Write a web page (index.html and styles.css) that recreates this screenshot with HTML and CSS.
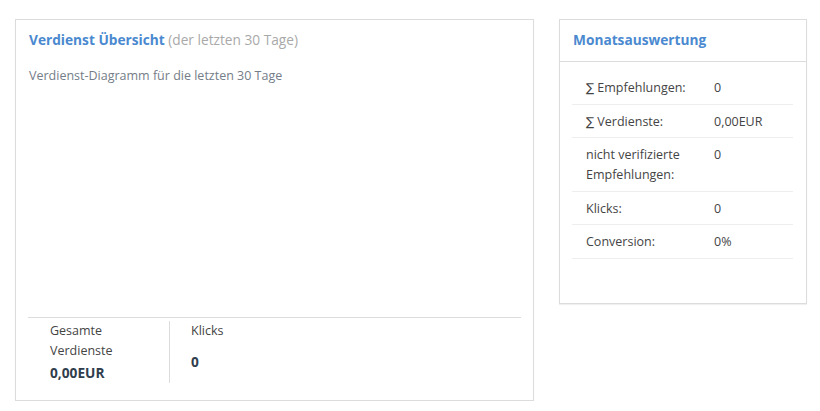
FILE: index.html
```html
<!DOCTYPE html>
<html lang="de">
<head>
<meta charset="utf-8">
<title>Verdienst Übersicht</title>
<link rel="stylesheet" href="styles.css">
</head>
<body>
<div class="page">
  <section class="card card-main">
    <div class="main-body">
      <h2 class="title">Verdienst Übersicht <span class="muted">(der letzten 30 Tage)</span></h2>
      <p class="subtitle">Verdienst-Diagramm für die letzten 30 Tage</p>
    </div>
    <div class="stats">
      <div class="stat">
        <div class="stat-label">Gesamte Verdienste</div>
        <div class="stat-value">0,00EUR</div>
      </div>
      <div class="stat stat-second">
        <div class="stat-label">Klicks</div>
        <div class="stat-value">0</div>
      </div>
    </div>
  </section>
  <section class="card card-side">
    <div class="side-header">
      <h2 class="title">Monatsauswertung</h2>
    </div>
    <div class="summary">
      <div class="row"><div class="cell label"><span class="sum">∑</span> Empfehlungen:</div><div class="cell">0</div></div>
      <div class="row"><div class="cell label"><span class="sum">∑</span> Verdienste:</div><div class="cell">0,00EUR</div></div>
      <div class="row"><div class="cell label">nicht verifizierte Empfehlungen:</div><div class="cell">0</div></div>
      <div class="row"><div class="cell label">Klicks:</div><div class="cell">0</div></div>
      <div class="row"><div class="cell label">Conversion:</div><div class="cell">0%</div></div>
    </div>
  </section>
</div>
</body>
</html>
```
FILE: styles.css
```css
* { box-sizing: border-box; }
html, body { margin: 0; padding: 0; background: #fff; }
body {
  font-family: "Open Sans", "Liberation Sans", Arial, sans-serif;
  font-size: 12.5px;
  line-height: 20px;
  color: #444;
}
.page {
  display: flex;
  align-items: flex-start;
  gap: 25px;
  padding: 19px 0 0 15px;
}
.card {
  background: #fff;
  border: 1px solid #dcdcdc;
  box-shadow: 0 1px 1px rgba(0,0,0,0.06);
}
.card-main {
  width: 519px;
  height: 382px;
  display: flex;
  flex-direction: column;
  justify-content: space-between;
  padding: 10px 12px 17px;
}
.main-body { padding-left: 1px; }
.title {
  margin: 0;
  font-size: 13.7px;
  line-height: 20px;
  font-weight: 700;
  color: #4a89cf;
}
.muted { font-weight: 400; color: #a9a9a9; }
.subtitle {
  margin: 17px 0 0;
  font-size: 12.5px;
  line-height: 18px;
  color: #747d88;
}
.stats {
  display: flex;
  border-top: 1px solid #dcdcdc;
  padding-top: 3px;
}
.stat {
  width: 142px;
  padding: 0 22px;
  border-right: 1px solid #dcdcdc;
}
.stat-second { border-right: 0; padding-left: 21px; }
.stat-label { color: #444; }
.stat-value {
  font-size: 13.7px;
  font-weight: 700;
  color: #2f3d4d;
  margin-top: 2px;
}
.stat-second .stat-value { margin-top: 11px; }
.card-side {
  width: 248px;
  height: 285px;
}
.side-header {
  padding: 10px 13px 11px;
  border-bottom: 1px solid #dcdcdc;
}
.summary {
  margin: 9px 13px 0 12px;
}
.row {
  display: flex;
  border-bottom: 1px solid #eeeeee;
}
.cell {
  padding: 7px 10px 5.5px 14px;
}
.label { width: 128px; flex: none; }
.sum { font-family: "DejaVu Sans", sans-serif; font-size: 12px; }
```
